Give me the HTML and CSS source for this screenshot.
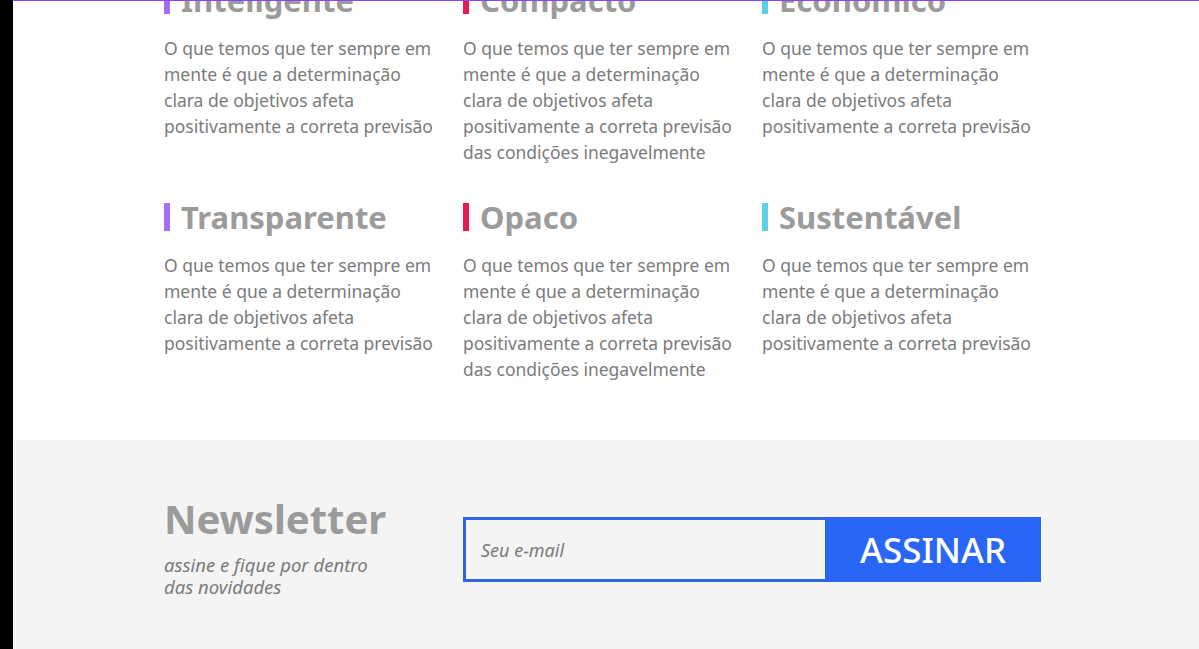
FILE: index.html
```html
<!DOCTYPE html>
<html lang="pt-BR">
<head>
    <meta charset="UTF-8">
    <meta name="viewport" content="width=device-width, initial-scale=1.0">
    <title>Recursos</title>
    <link rel="stylesheet" href="styles.css">
</head>
<body>

<div class="page">
    <section class="features">
        <div class="container features-grid">
            <div class="feature">
                <h3 class="feature-title purple">Inteligente</h3>
                <p>O que temos que ter sempre em mente é que a determinação clara de objetivos afeta positivamente a correta previsão</p>
            </div>
            <div class="feature">
                <h3 class="feature-title red">Compacto</h3>
                <p>O que temos que ter sempre em mente é que a determinação clara de objetivos afeta positivamente a correta previsão das condições inegavelmente</p>
            </div>
            <div class="feature">
                <h3 class="feature-title cyan">Econômico</h3>
                <p>O que temos que ter sempre em mente é que a determinação clara de objetivos afeta positivamente a correta previsão</p>
            </div>
            <div class="feature">
                <h3 class="feature-title purple">Transparente</h3>
                <p>O que temos que ter sempre em mente é que a determinação clara de objetivos afeta positivamente a correta previsão</p>
            </div>
            <div class="feature">
                <h3 class="feature-title red">Opaco</h3>
                <p>O que temos que ter sempre em mente é que a determinação clara de objetivos afeta positivamente a correta previsão das condições inegavelmente</p>
            </div>
            <div class="feature">
                <h3 class="feature-title cyan">Sustentável</h3>
                <p>O que temos que ter sempre em mente é que a determinação clara de objetivos afeta positivamente a correta previsão</p>
            </div>
        </div>
    </section>

    <section class="newsletter">
        <div class="container newsletter-row">
            <div class="newsletter-info">
                <h2>Newsletter</h2>
                <p>assine e fique por dentro das novidades</p>
            </div>
            <form class="newsletter-form" onsubmit="return false">
                <input type="email" placeholder="Seu e-mail">
                <button type="submit">ASSINAR</button>
            </form>
        </div>
    </section>
</div>

</body>
</html>
```

FILE: styles.css
```css
html, body {
    margin: 0;
    height: 100%;
}

body {
    background: #000;
    font-family: "Noto Sans", sans-serif;
}

.page {
    margin-left: 13px;
    min-height: 100%;
    background: #f4f4f4;
    border-top: 1px solid #8a45f2;
    overflow: hidden;
}

.container {
    width: 877px;
    margin-left: 151px;
}

/* features */
.features {
    background: #fff;
    margin-top: -21px;
    padding-bottom: 58px;
}

.features-grid {
    display: grid;
    grid-template-columns: repeat(3, 279px);
    column-gap: 20px;
    row-gap: 32px;
}

.feature-title {
    display: flex;
    align-items: center;
    gap: 11px;
    margin: 0 0 15px;
    font-size: 31px;
    line-height: 40px;
    font-weight: 700;
    color: #9b9b9b;
}

.feature-title::before {
    content: "";
    width: 6px;
    height: 28px;
    background: #a56ef5;
}

.feature-title.red::before {
    background: #e8194f;
}

.feature-title.cyan::before {
    background: #5dd0e8;
}

.feature p {
    margin: 0;
    width: 276px;
    font-size: 17.5px;
    line-height: 26px;
    color: #7b7b7b;
}

/* newsletter */
.newsletter {
    padding: 55px 0 60px;
}

.newsletter-row {
    display: flex;
    align-items: center;
    gap: 20px;
}

.newsletter-info {
    width: 279px;
}

.newsletter-info h2 {
    margin: 0 0 11px;
    font-size: 40px;
    line-height: 48px;
    font-weight: 700;
    color: #9b9b9b;
}

.newsletter-info p {
    margin: 0;
    width: 225px;
    font-size: 18.5px;
    line-height: 22px;
    font-style: italic;
    color: #7b7b7b;
}

.newsletter-form {
    display: flex;
    height: 65px;
    margin-top: 6px;
}

.newsletter-form input {
    width: 362px;
    box-sizing: border-box;
    border: 3px solid #2f64e6;
    border-right: none;
    background: #f4f4f4;
    padding: 0 15px;
    font-family: inherit;
    font-size: 18px;
    font-style: italic;
    color: #555;
    outline: none;
}

.newsletter-form input::placeholder {
    color: #7b7b7b;
}

.newsletter-form button {
    width: 216px;
    border: none;
    background: #2a66f5;
    color: #fff;
    font-family: inherit;
    font-size: 35px;
    font-weight: 500;
    cursor: pointer;
}
```
